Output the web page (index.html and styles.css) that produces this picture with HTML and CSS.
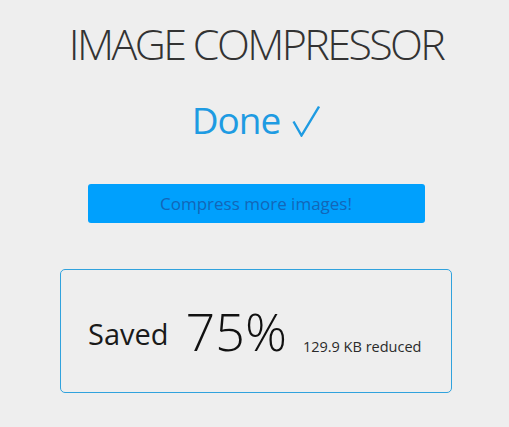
FILE: index.html
```html
<!DOCTYPE html>
<html>
<head>
<meta charset="utf-8">
<link rel="stylesheet" href="styles.css">
</head>
<body>
<main class="page">
  <h1 class="title">IMAGE COMPRESSOR</h1>
  <div class="status"><span class="done">Done</span><svg class="check" viewBox="0 0 28 32" width="28" height="32" aria-label="✓"><polyline points="1.5,16.5 9.5,30.5 27,1.5" fill="none" stroke="currentColor" stroke-width="2.4" stroke-linejoin="miter"/></svg></div>
  <button class="more">Compress more images!</button>
  <section class="result">
    <span class="saved">Saved</span>
    <span class="percent">75%</span>
    <span class="reduced">129.9 KB reduced</span>
  </section>
</main>
</body>
</html>
```

FILE: styles.css
```css
html, body {
  margin: 0;
  padding: 0;
  background: #eeeeee;
}
body {
  font-family: "Open Sans", "Liberation Sans", sans-serif;
  width: 509px;
  height: 427px;
  overflow: hidden;
}
.page {
  display: flex;
  flex-direction: column;
  align-items: center;
  padding-left: 3px;
}
.title {
  margin: 16px 0 0;
  font-size: 43px;
  line-height: 56px;
  font-weight: 300;
  letter-spacing: -2.6px;
  color: #333333;
}
.status {
  margin-top: 24px;
  font-size: 37px;
  line-height: 48px;
  height: 48px;
  font-weight: 400;
  color: #1e9be2;
  white-space: nowrap;
}
.done {
  letter-spacing: -1px;
}
.check {
  margin-left: 12px;
  vertical-align: -3px;
}
.more {
  margin-top: 40px;
  width: 337px;
  height: 39px;
  border: none;
  border-radius: 3px;
  background: #00a0fd;
  color: #1366b8;
  font-family: inherit;
  font-size: 17px;
  padding: 0;
}
.result {
  margin-top: 46px;
  box-sizing: border-box;
  width: 392px;
  height: 124px;
  border: 1px solid #30a2dd;
  border-radius: 5px;
  display: flex;
  align-items: flex-end;
  padding: 0 0 34px 27px;
}
.saved {
  font-size: 29px;
  line-height: 1;
  color: #1a1a1a;
  margin-bottom: 10px;
}
.percent {
  margin-left: 17px;
  font-size: 52px;
  line-height: 1;
  font-weight: 300;
  color: #111111;
  margin-bottom: 1px;
}
.reduced {
  margin-left: 16px;
  font-size: 14.5px;
  line-height: 1;
  color: #2a2a2a;
  margin-bottom: 4px;
}
```
